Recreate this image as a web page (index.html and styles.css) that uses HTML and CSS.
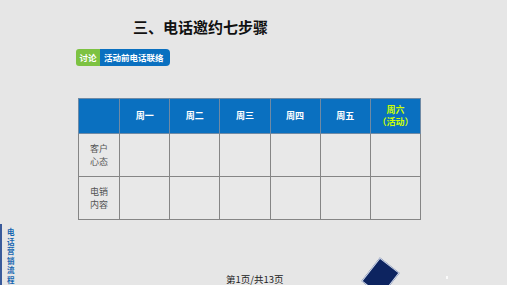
FILE: index.html
```html
<!DOCTYPE html>
<html>
  <head>
    <meta charset="UTF-8">
    <title>三、电话邀约七步骤</title>
    <link rel="stylesheet" href="styles.css">
  </head>
  <body>
    <div class="slide">
      <h1 class="title">三、电话邀约七步骤</h1>

      <div class="tag">
        <span class="tag-key">讨论</span>
        <span class="tag-value">活动前电话联络</span>
      </div>

      <table class="plan">
        <tr class="head">
          <th class="corner"></th>
          <th>周一</th>
          <th>周二</th>
          <th>周三</th>
          <th>周四</th>
          <th>周五</th>
          <th class="special">周六<br>（活动）</th>
        </tr>
        <tr>
          <td class="label">客户<br>心态</td>
          <td></td><td></td><td></td><td></td><td></td><td></td>
        </tr>
        <tr>
          <td class="label">电销<br>内容</td>
          <td></td><td></td><td></td><td></td><td></td><td></td>
        </tr>
      </table>

      <div class="footer">
        <div class="side"><span class="side-text">电话营销流程</span></div>
        <div class="pager">第1页/共13页</div>
      </div>

      <div class="diamond"></div>
      <div class="dot"></div>
    </div>
  </body>
</html>
```

FILE: styles.css
```css
*
{
  box-sizing: border-box;
}

body
{
  margin: 0;
  background: #e6e6e6;
  font-family: "Noto Sans CJK SC", "Noto Sans", sans-serif;
}

.slide
{
  position: relative;
  width: 507px;
  height: 285px;
  overflow: hidden;
  background: #e6e6e6;
}

.title
{
  margin: 0;
  padding: 17px 0 0 133px;
  font-size: 15px;
  line-height: 20px;
  font-weight: bold;
  color: #111;
}

.tag
{
  display: flex;
  margin: 12px 0 0 76px;
  height: 17px;
  font-size: 8.5px;
  line-height: 17px;
  font-weight: bold;
  color: #fff;
}

.tag-key
{
  width: 24px;
  text-align: center;
  background: #7dc242;
  border-radius: 3px 0 0 3px;
}

.tag-value
{
  width: 70px;
  padding-left: 4px;
  background: #0a70c0;
  border-radius: 0 4px 4px 0;
}

.plan
{
  margin: 32px 0 0 78px;
  border-collapse: collapse;
  width: 343px;
  font-size: 9px;
  line-height: 12px;
}

.plan th,
.plan td
{
  border: 1px solid #858585;
  text-align: center;
  padding: 0;
}

.plan th
{
  width: 50px;
  height: 35px;
  background: #0a70c0;
  color: #fff;
  font-weight: bold;
  border-color: #6f8aa5;
}

.plan th.corner
{
  width: 41px;
}

.plan th.special
{
  color: #ccff00;
}

.plan td
{
  height: 43px;
  background: #e8e8e8;
}

.plan td.label
{
  color: #555;
  line-height: 13px;
}

.footer
{
  display: flex;
  margin-top: 4px;
}

.side
{
  flex: none;
  width: 15px;
  height: 63px;
  padding: 3px 0 0 5px;
  border-left: 2px solid #3a5a9a;
}

.side-text
{
  display: block;
  width: 8px;
  font-size: 7.5px;
  line-height: 9.5px;
  font-weight: bold;
  color: #1565b0;
  word-break: break-all;
}

.pager
{
  margin: 49px 0 0 211px;
  font-size: 9.5px;
  line-height: 12px;
  color: #222;
}

.diamond
{
  position: absolute;
  left: 368px;
  top: 262px;
  width: 25px;
  height: 30px;
  background: #0d2460;
  border: 1px solid #cfd8ea;
  transform: rotate(38deg);
}

.dot
{
  position: absolute;
  left: 446px;
  top: 276px;
  width: 2px;
  height: 3px;
  background: #fafafa;
}
```
